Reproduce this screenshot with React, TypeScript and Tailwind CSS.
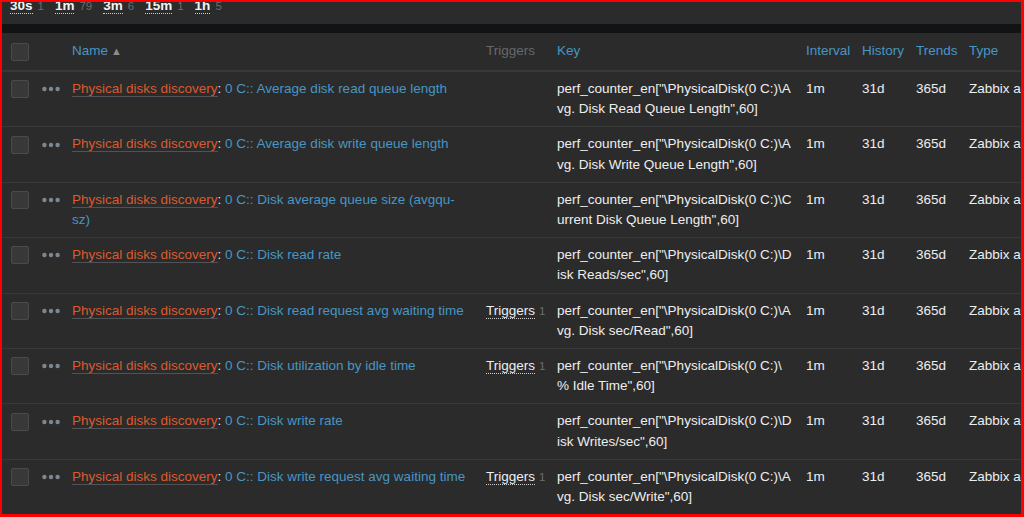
import React from "react";

type Item = {
  name: string;
  key: string;
  triggers?: number;
};

const items: Item[] = [
  { name: "0 C:: Average disk read queue length", key: 'perf_counter_en["\\PhysicalDisk(0 C:)\\Avg. Disk Read Queue Length",60]' },
  { name: "0 C:: Average disk write queue length", key: 'perf_counter_en["\\PhysicalDisk(0 C:)\\Avg. Disk Write Queue Length",60]' },
  { name: "0 C:: Disk average queue size (avgqu-sz)", key: 'perf_counter_en["\\PhysicalDisk(0 C:)\\Current Disk Queue Length",60]' },
  { name: "0 C:: Disk read rate", key: 'perf_counter_en["\\PhysicalDisk(0 C:)\\Disk Reads/sec",60]' },
  { name: "0 C:: Disk read request avg waiting time", key: 'perf_counter_en["\\PhysicalDisk(0 C:)\\Avg. Disk sec/Read",60]', triggers: 1 },
  { name: "0 C:: Disk utilization by idle time", key: 'perf_counter_en["\\PhysicalDisk(0 C:)\\% Idle Time",60]', triggers: 1 },
  { name: "0 C:: Disk write rate", key: 'perf_counter_en["\\PhysicalDisk(0 C:)\\Disk Writes/sec",60]' },
  { name: "0 C:: Disk write request avg waiting time", key: 'perf_counter_en["\\PhysicalDisk(0 C:)\\Avg. Disk sec/Write",60]', triggers: 1 },
];

const intervals = [
  { label: "30s", count: 1 },
  { label: "1m", count: 79 },
  { label: "3m", count: 6 },
  { label: "15m", count: 1 },
  { label: "1h", count: 5 },
];

function Checkbox() {
  return <span className="block h-[18px] w-[18px] rounded-[2px] border border-[#4b4b4b] bg-[#383838]" />;
}

function MoreDots() {
  return (
    <svg width="18" height="6" viewBox="0 0 18 6" className="block">
      <circle cx="2.4" cy="3" r="2.2" fill="#7c8791" />
      <circle cx="9" cy="3" r="2.2" fill="#7c8791" />
      <circle cx="15.6" cy="3" r="2.2" fill="#7c8791" />
    </svg>
  );
}

export default function App() {
  return (
    <div
      className="h-[517px] w-[1024px] overflow-hidden border-t-2 border-l-2 border-r-[3px] border-b-[3px] border-[#ff0000] bg-[#2b2b2b] text-[13.5px] text-[#eeeeee]"
      style={{ fontFamily: '"Liberation Sans", Arial, sans-serif' }}
    >
      {/* interval subfilter */}
      <div className="flex h-[22px] gap-[11px] overflow-hidden pl-[8px]">
        {intervals.map((i) => (
          <div key={i.label} className="-mt-[3px] flex items-baseline leading-[14px]">
            <span className="border-b border-dotted border-[#cfcfcf] font-bold text-[#f2f2f2]">{i.label}</span>
            <span className="ml-[5px] text-[11.5px] text-[#6d6d6d]">{i.count}</span>
          </div>
        ))}
      </div>
      <div className="h-[9px] bg-[#121314]" />

      <table className="w-[1098px] table-fixed border-collapse">
        <colgroup>
          <col className="w-[34px]" />
          <col className="w-[30px]" />
          <col className="w-[414px]" />
          <col className="w-[71px]" />
          <col className="w-[249px]" />
          <col className="w-[56px]" />
          <col className="w-[54px]" />
          <col className="w-[53px]" />
          <col />
        </colgroup>
        <thead>
          <tr className="h-[38px] border-b-2 border-[#383838] text-left">
            <th className="pl-[9px] align-middle">
              <Checkbox />
            </th>
            <th />
            <th className="pl-[6px] font-normal text-[#4796c4]">
              Name<span className="ml-[3px] text-[11px] text-[#8c8c8c]">▲</span>
            </th>
            <th className="pl-[6px] font-normal text-[#686868]">Triggers</th>
            <th className="pl-[6px] font-normal text-[#4796c4]">Key</th>
            <th className="pl-[6px] font-normal text-[#4796c4]">Interval</th>
            <th className="pl-[6px] font-normal text-[#4796c4]">History</th>
            <th className="pl-[6px] font-normal text-[#4796c4]">Trends</th>
            <th className="pl-[6px] font-normal text-[#4796c4]">Type</th>
          </tr>
        </thead>
        <tbody>
          {items.map((it) => (
            <tr key={it.key} className="h-[55.4px] border-b border-[#383838] align-top leading-[20.2px]">
              <td className="py-[7px] pl-[9px]">
                <div className="flex h-[20.2px] items-center">
                  <Checkbox />
                </div>
              </td>
              <td className="py-[7px] pl-[6px]">
                <div className="flex h-[20.2px] items-center">
                  <MoreDots />
                </div>
              </td>
              <td className="py-[7px] pr-[8px] pl-[6px]">
                <span className="border-b border-[#4f5357] text-[#dc5a2e]">Physical disks discovery</span>
                <span className="text-[#f2f2f2]">: </span>
                <span className="text-[#4796c4]">{it.name}</span>
              </td>
              <td className="py-[7px] pl-[6px] whitespace-nowrap">
                {it.triggers ? (
                  <>
                    <span className="border-b border-dotted border-[#cfcfcf]">Triggers</span>
                    <span className="ml-[4px] text-[11.5px] text-[#6d6d6d]">{it.triggers}</span>
                  </>
                ) : null}
              </td>
              <td className="py-[7px] pr-[8px] pl-[6px] break-all">{it.key}</td>
              <td className="py-[7px] pl-[6px]">1m</td>
              <td className="py-[7px] pl-[6px]">31d</td>
              <td className="py-[7px] pl-[6px]">365d</td>
              <td className="py-[7px] pl-[6px] whitespace-nowrap">Zabbix agent</td>
            </tr>
          ))}
        </tbody>
      </table>
    </div>
  );
}
